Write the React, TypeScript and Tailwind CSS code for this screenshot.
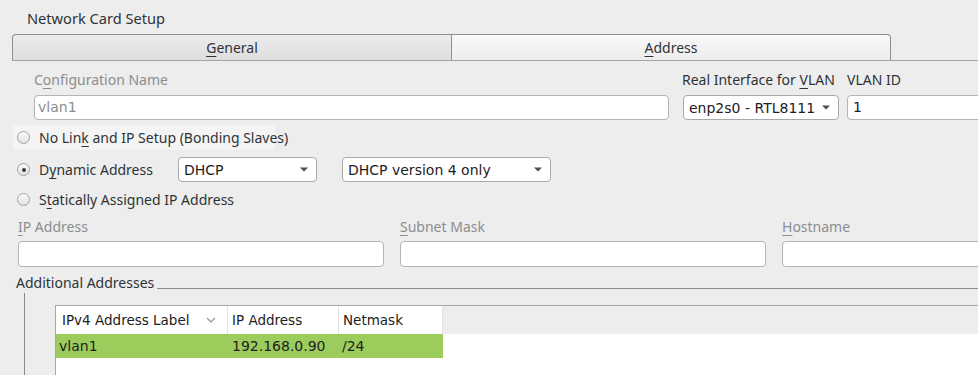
import React from 'react'

const ui = "font-['Noto_Sans',sans-serif]"
const mono = "font-['DejaVu_Sans',sans-serif]"

function U({ children }: { children: React.ReactNode }) {
  return <span className="underline decoration-1 underline-offset-[3px]">{children}</span>
}

function Arrow() {
  return (
    <svg width="8" height="5" viewBox="0 0 8 5" className="shrink-0">
      <path d="M0 0.5 L8 0.5 L4 4.5 Z" fill="#4b4f50" />
    </svg>
  )
}

function Combo({ value, width }: { value: string; width: string }) {
  return (
    <div
      className={`${width} h-[25px] shrink-0 flex items-center justify-between pl-[5px] pr-[8px] bg-white border border-[#a9a9a9] rounded-[4px] ${mono} text-[14px] text-[#1e2122]`}
    >
      <span className="leading-none whitespace-nowrap">{value}</span>
      <Arrow />
    </div>
  )
}

function Radio({ checked }: { checked?: boolean }) {
  return (
    <span className="w-[13px] h-[13px] rounded-full border border-[#a2a2a2] bg-gradient-to-b from-[#fafafa] to-[#e2e2e2] flex items-center justify-center shrink-0">
      {checked && <span className="w-[4px] h-[4px] rounded-full bg-[#3a3d3e]" />}
    </span>
  )
}

function Field({ label, width }: { label: React.ReactNode; width: string }) {
  return (
    <div className={`${width} flex flex-col shrink-0`}>
      <div className="h-[20px] leading-[20px] text-[#8b8e8f]">{label}</div>
      <div className="mt-[4px] h-[26px] bg-white border border-[#b4b4b4] rounded-[4px]" />
    </div>
  )
}

export default function App() {
  return (
    <div className={`w-[978px] h-[375px] overflow-hidden bg-[#ededed] ${ui} text-[14px] text-[#2e3436]`}>
      {/* title */}
      <div className="h-[34px] pt-[9px] pl-[27px] leading-[18px] text-[14.6px]">Network Card Setup</div>

      {/* tabs */}
      <div className="ml-[12px] flex border-b border-[#a3a3a3]">
        <div className="w-[439px] h-[26px] shrink-0 border-l border-t border-[#8f8f8f] rounded-tl-[4px] bg-gradient-to-b from-[#ececec] to-[#dedede] flex items-center justify-center">
          <span><U>G</U>eneral</span>
        </div>
        <div className="w-[440px] h-[26px] shrink-0 border-l border-t border-r border-[#8f8f8f] rounded-tr-[4px] bg-gradient-to-b from-[#f8f8f8] to-[#ededed] flex items-center justify-center">
          <span><U>A</U>ddress</span>
        </div>
      </div>

      {/* configuration name / interface / vlan id */}
      <div className="flex pt-[9px]">
        <div className="ml-[34px] w-[635px] shrink-0 flex flex-col">
          <div className="h-[20px] leading-[20px] text-[#8b8e8f]">C<U>o</U>nfiguration Name</div>
          <div className={`mt-[5px] h-[25px] bg-white border border-[#b4b4b4] rounded-[4px] pl-[3px] flex items-center ${mono} text-[14px] text-[#8b8e8f]`}>
            vlan1
          </div>
        </div>
        <div className="ml-[13px] w-[157px] shrink-0 flex flex-col">
          <div className="h-[20px] leading-[20px] whitespace-nowrap">Real Interface for <U>V</U>LAN</div>
          <div className="mt-[5px] ml-[1px]">
            <Combo value="enp2s0 - RTL8111" width="w-[156px]" />
          </div>
        </div>
        <div className="ml-[8px] w-[170px] shrink-0 flex flex-col">
          <div className="h-[20px] leading-[20px] whitespace-nowrap">VLAN ID</div>
          <div className={`mt-[5px] h-[25px] bg-white border border-[#b4b4b4] rounded-[4px] pl-[5px] flex items-center ${mono} text-[14px] text-[#1e2122]`}>
            1
          </div>
        </div>
      </div>

      {/* radios */}
      <div className="mt-[5px] ml-[13px] w-[262px] h-[25px] bg-[#f4f4f4] flex items-center pl-[4px] gap-[9px] whitespace-nowrap">
        <Radio />
        <span>No Lin<U>k</U> and IP Setup (Bonding Slaves)</span>
      </div>
      <div className="mt-[7px] h-[25px] flex items-center">
        <div className="ml-[17px] w-[161px] shrink-0 flex items-center gap-[9px] whitespace-nowrap">
          <Radio checked />
          <span>D<U>y</U>namic Address</span>
        </div>
        <Combo value="DHCP" width="w-[139px]" />
        <div className="ml-[25px]">
          <Combo value="DHCP version 4 only" width="w-[209px]" />
        </div>
      </div>
      <div className="mt-[5px] h-[25px] flex items-center pl-[17px] gap-[9px] whitespace-nowrap">
        <Radio />
        <span>S<U>t</U>atically Assigned IP Address</span>
      </div>

      {/* ip fields */}
      <div className="mt-[5px] ml-[18px] flex gap-[16px]">
        <Field label={<><U>I</U>P Address</>} width="w-[366px]" />
        <Field label={<><U>S</U>ubnet Mask</>} width="w-[366px]" />
        <Field label={<><U>H</U>ostname</>} width="w-[366px]" />
      </div>

      {/* additional addresses */}
      <div className="mt-[6px] ml-[16px] flex h-[20px]">
        <span className="leading-[20px] pr-[3px] whitespace-nowrap">Additional Addresses</span>
        <div className="flex-1 mt-[15px] h-px bg-[#8c8c8c]" />
      </div>
      <div className="ml-[24px] border-l border-[#8c8c8c] h-[100px] pt-[12px] pl-[30px]">
        <div className="border-t border-l border-[#a8a8a8] h-full flex flex-col">
          <div className={`h-[28px] flex ${mono} text-[13.5px] text-[#1e2122]`}>
            <div className="w-[172px] shrink-0 bg-white border-r border-[#e2e2e2] flex items-center justify-between pl-[6px] pr-[11px]">
              <span>IPv4 Address Label</span>
              <svg width="10" height="6" viewBox="0 0 10 6">
                <path d="M1 1 L5 5 L9 1" fill="none" stroke="#9a9a9a" strokeWidth="1.3" />
              </svg>
            </div>
            <div className="w-[111px] shrink-0 bg-white border-r border-[#e2e2e2] flex items-center pl-[4px]">IP Address</div>
            <div className="w-[104px] shrink-0 bg-white border-r border-[#e2e2e2] flex items-center pl-[4px]">Netmask</div>
            <div className="flex-1" />
          </div>
          <div className="flex-1 bg-white">
            <div className={`w-[387px] h-[24px] bg-[#9ccc5b] flex items-center ${mono} text-[14px] text-[#1e2122]`}>
              <span className="w-[172px] pl-[3px]">vlan1</span>
              <span className="w-[111px] pl-[4px]">192.168.0.90</span>
              <span className="pl-[3px]">/24</span>
            </div>
          </div>
        </div>
      </div>
    </div>
  )
}
